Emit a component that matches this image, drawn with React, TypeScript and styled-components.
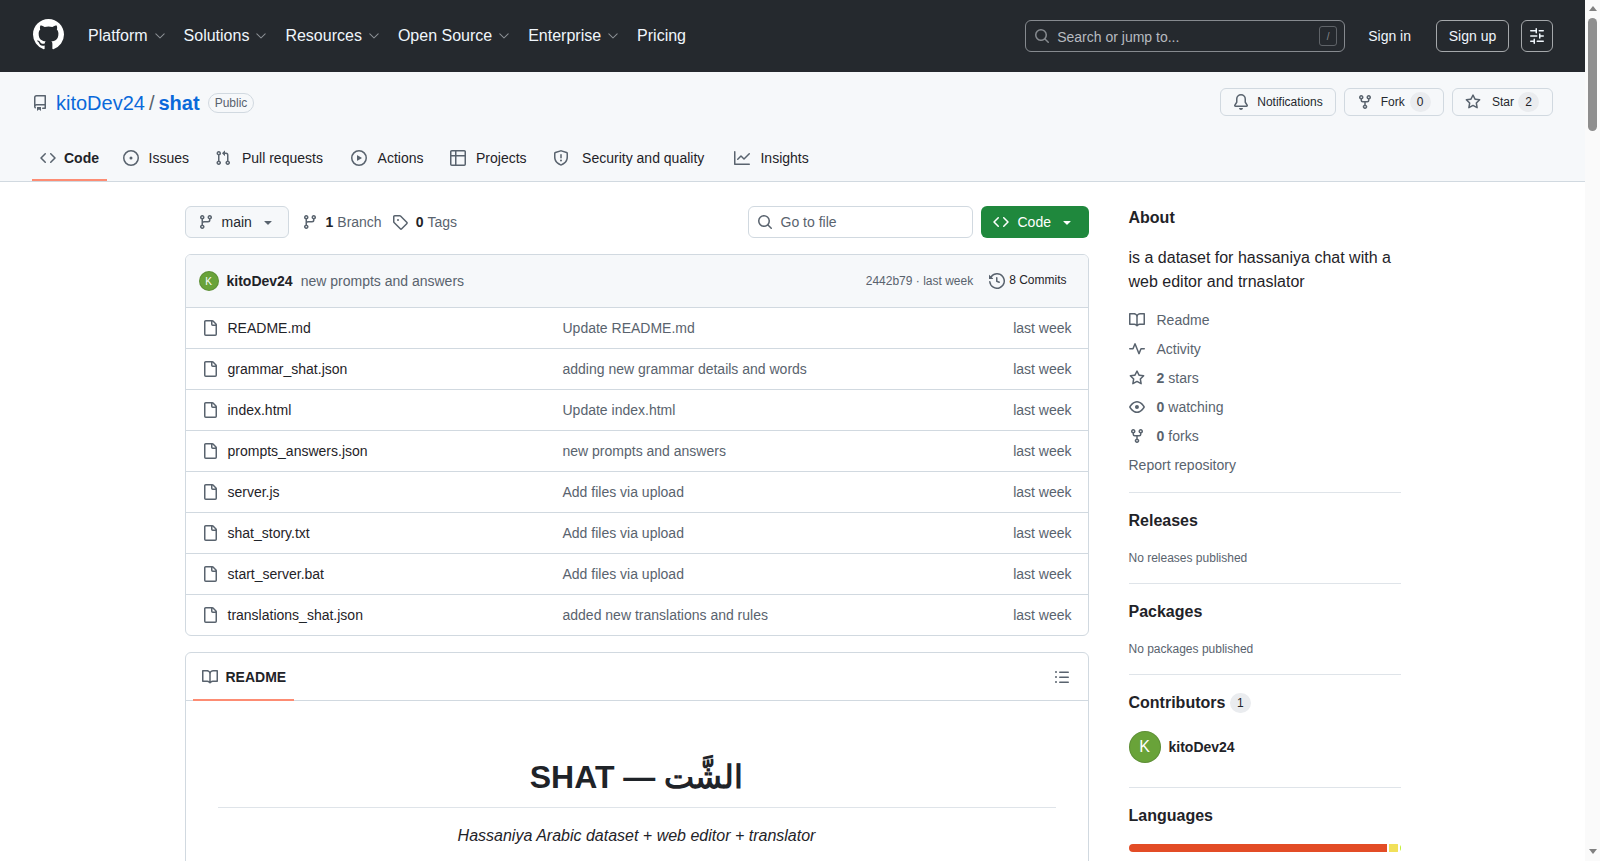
import styled, { createGlobalStyle } from "styled-components";
import { GoChevronDown } from "react-icons/go";

const GlobalStyle = createGlobalStyle`
  html, body {
    margin: 0;
    height: 100%;
    overflow: hidden;
    background: #fff;
  }
  body {
    font-family: "Liberation Sans", sans-serif;
    font-size: 14px;
    color: #1f2328;
  }
  * {
    box-sizing: border-box;
  }
`;

// 16px octicons, the react-icons set only ships the thinner 24px drawings
const icons = {
  bell: "M8 16a2 2 0 0 0 1.985-1.75c.017-.137-.097-.25-.235-.25h-3.5c-.138 0-.252.113-.235.25A2 2 0 0 0 8 16ZM3 5a5 5 0 0 1 10 0v2.947c0 .05.015.098.042.139l1.703 2.555A1.519 1.519 0 0 1 13.482 13H2.518a1.516 1.516 0 0 1-1.263-2.36l1.703-2.554A.255.255 0 0 0 3 7.947Zm5-3.5A3.5 3.5 0 0 0 4.5 5v2.947c0 .346-.102.683-.294.97l-1.703 2.556a.017.017 0 0 0-.003.01l.001.006c0 .002.002.004.004.006l.006.004.007.001h10.964l.007-.001.006-.004.004-.006.001-.007a.017.017 0 0 0-.003-.01l-1.703-2.554a1.745 1.745 0 0 1-.294-.97V5A3.5 3.5 0 0 0 8 1.5Z",
  book: "M0 1.75A.75.75 0 0 1 .75 1h4.253c1.227 0 2.317.59 3 1.501A3.743 3.743 0 0 1 11.006 1h4.245a.75.75 0 0 1 .75.75v10.5a.75.75 0 0 1-.75.75h-4.507a2.25 2.25 0 0 0-1.591.659l-.622.621a.75.75 0 0 1-1.06 0l-.622-.621A2.25 2.25 0 0 0 5.258 13H.75a.75.75 0 0 1-.75-.75Zm7.251 10.324.004-5.073-.002-2.253A2.25 2.25 0 0 0 5.003 2.5H1.5v9h3.757a3.75 3.75 0 0 1 1.994.574ZM8.755 4.75l-.004 7.322a3.752 3.752 0 0 1 1.992-.572H14.5v-9h-3.495a2.25 2.25 0 0 0-2.25 2.25Z",
  code: "m11.28 3.22 4.25 4.25a.75.75 0 0 1 0 1.06l-4.25 4.25a.749.749 0 0 1-1.275-.326.749.749 0 0 1 .215-.734L13.94 8l-3.72-3.72a.749.749 0 0 1 .326-1.275.749.749 0 0 1 .734.215Zm-6.56 0a.751.751 0 0 1 1.042.018.751.751 0 0 1 .018 1.042L2.06 8l3.72 3.72a.749.749 0 0 1-.326 1.275.749.749 0 0 1-.734-.215L.47 8.53a.75.75 0 0 1 0-1.06Z",
  eye: "M8 2c1.981 0 3.671.992 4.933 2.078 1.27 1.091 2.187 2.345 2.637 3.023a1.62 1.62 0 0 1 0 1.798c-.45.678-1.367 1.932-2.637 3.023C11.67 13.008 9.981 14 8 14c-1.981 0-3.671-.992-4.933-2.078C1.797 10.83.88 9.576.43 8.898a1.62 1.62 0 0 1 0-1.798c.45-.677 1.367-1.931 2.637-3.022C4.33 2.992 6.019 2 8 2ZM1.679 7.932a.12.12 0 0 0 0 .136c.411.622 1.241 1.75 2.366 2.717C5.176 11.758 6.527 12.5 8 12.5c1.473 0 2.825-.742 3.955-1.715 1.124-.967 1.954-2.096 2.366-2.717a.12.12 0 0 0 0-.136c-.412-.621-1.242-1.75-2.366-2.717C10.824 4.242 9.473 3.5 8 3.5c-1.473 0-2.825.742-3.955 1.715-1.124.967-1.954 2.096-2.366 2.717ZM8 10a2 2 0 1 1-.001-3.999A2 2 0 0 1 8 10Z",
  file: "M2 1.75C2 .784 2.784 0 3.75 0h6.586c.464 0 .909.184 1.237.513l2.914 2.914c.329.328.513.773.513 1.237v9.586A1.75 1.75 0 0 1 13.25 16h-9.5A1.75 1.75 0 0 1 2 14.25Zm1.75-.25a.25.25 0 0 0-.25.25v12.5c0 .138.112.25.25.25h9.5a.25.25 0 0 0 .25-.25V6h-2.75A1.75 1.75 0 0 1 9 4.25V1.5Zm6.75.062V4.25c0 .138.112.25.25.25h2.688l-.011-.013-2.914-2.914-.013-.011Z",
  fork: "M5 5.372v.878c0 .414.336.75.75.75h4.5a.75.75 0 0 0 .75-.75v-.878a2.25 2.25 0 1 1 1.5 0v.878a2.25 2.25 0 0 1-2.25 2.25h-1.5v2.128a2.251 2.251 0 1 1-1.5 0V8.5h-1.5A2.25 2.25 0 0 1 3.5 6.25v-.878a2.25 2.25 0 1 1 1.5 0ZM5 3.25a.75.75 0 1 0-1.5 0 .75.75 0 0 0 1.5 0Zm6.75.75a.75.75 0 1 0 0-1.5.75.75 0 0 0 0 1.5Zm-3 8.75a.75.75 0 1 0-1.5 0 .75.75 0 0 0 1.5 0Z",
  branch: "M9.5 3.25a2.25 2.25 0 1 1 3 2.122V6A2.5 2.5 0 0 1 10 8.5H6a1 1 0 0 0-1 1v1.128a2.251 2.251 0 1 1-1.5 0V5.372a2.25 2.25 0 1 1 1.5 0v1.836A2.493 2.493 0 0 1 6 7h4a1 1 0 0 0 1-1v-.628A2.25 2.25 0 0 1 9.5 3.25Zm-6 0a.75.75 0 1 0 1.5 0 .75.75 0 0 0-1.5 0Zm8.25-.75a.75.75 0 1 0 0 1.5.75.75 0 0 0 0-1.5ZM4.25 12a.75.75 0 1 0 0 1.5.75.75 0 0 0 0-1.5Z",
  graph: "M1.5 1.75V13.5h13.75a.75.75 0 0 1 0 1.5H.75a.75.75 0 0 1-.75-.75V1.75a.75.75 0 0 1 1.5 0Zm14.28 2.53-5.25 5.25a.75.75 0 0 1-1.06 0L7 7.06 4.28 9.78a.751.751 0 0 1-1.042-.018.751.751 0 0 1-.018-1.042l3.25-3.25a.75.75 0 0 1 1.06 0L10 7.94l4.72-4.72a.751.751 0 0 1 1.042.018.751.751 0 0 1 .018 1.042Z",
  history: "m.427 1.927 1.215 1.215a8.002 8.002 0 1 1-1.6 5.685.75.75 0 1 1 1.493-.154 6.5 6.5 0 1 0 1.18-4.458l1.358 1.358A.25.25 0 0 1 3.896 6H.25A.25.25 0 0 1 0 5.75V2.104a.25.25 0 0 1 .427-.177ZM7.75 4a.75.75 0 0 1 .75.75v2.992l2.028.812a.75.75 0 0 1-.557 1.392l-2.5-1A.751.751 0 0 1 7 8.25v-3.5A.75.75 0 0 1 7.75 4Z",
  issue: "M8 9.5a1.5 1.5 0 1 0 0-3 1.5 1.5 0 0 0 0 3ZM8 0a8 8 0 1 1 0 16A8 8 0 0 1 8 0ZM1.5 8a6.5 6.5 0 1 0 13 0 6.5 6.5 0 0 0-13 0Z",
  list: "M5.75 2.5h8.5a.75.75 0 0 1 0 1.5h-8.5a.75.75 0 0 1 0-1.5Zm0 5h8.5a.75.75 0 0 1 0 1.5h-8.5a.75.75 0 0 1 0-1.5Zm0 5h8.5a.75.75 0 0 1 0 1.5h-8.5a.75.75 0 0 1 0-1.5ZM2 14a1 1 0 1 1 0-2 1 1 0 0 1 0 2Zm1-6a1 1 0 1 1-2 0 1 1 0 0 1 2 0ZM2 4a1 1 0 1 1 0-2 1 1 0 0 1 0 2Z",
  logo: "M8 0c4.42 0 8 3.58 8 8a8.013 8.013 0 0 1-5.45 7.59c-.4.08-.55-.17-.55-.38 0-.27.01-1.13.01-2.2 0-.75-.25-1.23-.54-1.48 1.78-.2 3.65-.88 3.65-3.95 0-.88-.31-1.59-.82-2.15.08-.2.36-1.02-.08-2.12 0 0-.67-.22-2.2.82-.64-.18-1.32-.27-2-.27-.68 0-1.36.09-2 .27-1.53-1.03-2.2-.82-2.2-.82-.44 1.1-.16 1.92-.08 2.12-.51.56-.82 1.28-.82 2.15 0 3.06 1.86 3.75 3.64 3.95-.23.2-.44.55-.51 1.07-.46.21-1.61.55-2.33-.66-.15-.24-.6-.83-1.23-.82-.67.01-.27.38.01.53.34.19.73.9.82 1.13.16.45.68 1.31 2.69.94 0 .67.01 1.3.01 1.49 0 .21-.15.45-.55.38A7.995 7.995 0 0 1 0 8c0-4.42 3.58-8 8-8Z",
  play: "M8 0a8 8 0 1 1 0 16A8 8 0 0 1 8 0ZM1.5 8a6.5 6.5 0 1 0 13 0 6.5 6.5 0 0 0-13 0Zm4.879-2.773 4.264 2.559a.25.25 0 0 1 0 .428l-4.264 2.559A.25.25 0 0 1 6 10.559V5.442a.25.25 0 0 1 .379-.215Z",
  pull: "M1.5 3.25a2.25 2.25 0 1 1 3 2.122v5.256a2.251 2.251 0 1 1-1.5 0V5.372A2.25 2.25 0 0 1 1.5 3.25Zm5.677-.177L9.573.677A.25.25 0 0 1 10 .854V2.5h1A2.5 2.5 0 0 1 13.5 5v5.628a2.251 2.251 0 1 1-1.5 0V5a1 1 0 0 0-1-1h-1v1.646a.25.25 0 0 1-.427.177L7.177 3.427a.25.25 0 0 1 0-.354ZM3.75 2.5a.75.75 0 1 0 0 1.5.75.75 0 0 0 0-1.5Zm0 9.5a.75.75 0 1 0 0 1.5.75.75 0 0 0 0-1.5Zm8.25.75a.75.75 0 1 0 1.5 0 .75.75 0 0 0-1.5 0Z",
  pulse: "M6 2c.306 0 .582.187.696.471L10 10.731l1.304-3.26A.751.751 0 0 1 12 7h3.25a.75.75 0 0 1 0 1.5h-2.742l-1.812 4.528a.751.751 0 0 1-1.392 0L6 4.77 4.696 8.03A.75.75 0 0 1 4 8.5H.75a.75.75 0 0 1 0-1.5h2.742l1.812-4.529A.751.751 0 0 1 6 2Z",
  repo: "M2 2.5A2.5 2.5 0 0 1 4.5 0h8.75a.75.75 0 0 1 .75.75v12.5a.75.75 0 0 1-.75.75h-2.5a.75.75 0 0 1 0-1.5h1.75v-2h-8a1 1 0 0 0-.714 1.7.75.75 0 1 1-1.072 1.05A2.495 2.495 0 0 1 2 11.5Zm10.5-1h-8a1 1 0 0 0-1 1v6.708A2.486 2.486 0 0 1 4.5 9h8ZM5 12.25a.25.25 0 0 1 .25-.25h3.5a.25.25 0 0 1 .25.25v3.25a.25.25 0 0 1-.4.2l-1.45-1.087a.249.249 0 0 0-.3 0L5.4 15.7a.25.25 0 0 1-.4-.2Z",
  search: "M10.68 11.74a6 6 0 0 1-7.922-8.982 6 6 0 0 1 8.982 7.922l3.04 3.04a.749.749 0 0 1-.326 1.275.749.749 0 0 1-.734-.215ZM11.5 7a4.499 4.499 0 1 0-8.997 0A4.499 4.499 0 0 0 11.5 7Z",
  shield: "M7.467.133a1.748 1.748 0 0 1 1.066 0l5.25 1.68A1.75 1.75 0 0 1 15 3.48V7c0 1.566-.32 3.182-1.303 4.682-.983 1.498-2.585 2.813-5.032 3.855a1.697 1.697 0 0 1-1.33 0c-2.447-1.042-4.049-2.357-5.032-3.855C1.32 10.182 1 8.566 1 7V3.48a1.75 1.75 0 0 1 1.217-1.667Zm.61 1.429a.25.25 0 0 0-.153 0l-5.25 1.68a.25.25 0 0 0-.174.238V7c0 1.358.275 2.666 1.057 3.86.784 1.194 2.121 2.34 4.366 3.297a.196.196 0 0 0 .154 0c2.245-.956 3.582-2.104 4.366-3.298C13.225 9.666 13.5 8.36 13.5 7V3.48a.251.251 0 0 0-.174-.237l-5.25-1.68ZM8.75 4.75v3a.75.75 0 0 1-1.5 0v-3a.75.75 0 0 1 1.5 0ZM9 10.5a1 1 0 1 1-2 0 1 1 0 0 1 2 0Z",
  sliders: "M15 2.75a.75.75 0 0 1-.75.75h-4a.75.75 0 0 1 0-1.5h4a.75.75 0 0 1 .75.75Zm-8.5.75v1.25a.75.75 0 0 0 1.5 0v-4a.75.75 0 0 0-1.5 0V2H1.75a.75.75 0 0 0 0 1.5H6.5Zm1.25 5.25a.75.75 0 0 0 0-1.5h-6a.75.75 0 0 0 0 1.5h6ZM15 8a.75.75 0 0 1-.75.75H11.5V10a.75.75 0 1 1-1.5 0V6a.75.75 0 0 1 1.5 0v1.25h2.75A.75.75 0 0 1 15 8Zm-9 5.25v-2a.75.75 0 0 0-1.5 0v1.25H1.75a.75.75 0 0 0 0 1.5H4.5v1.25a.75.75 0 0 0 1.5 0v-2Zm9 0a.75.75 0 0 1-.75.75h-6a.75.75 0 0 1 0-1.5h6a.75.75 0 0 1 .75.75Z",
  star: "M8 .25a.75.75 0 0 1 .673.418l1.882 3.815 4.21.612a.75.75 0 0 1 .416 1.279l-3.046 2.97.719 4.192a.751.751 0 0 1-1.088.791L8 12.347l-3.766 1.98a.75.75 0 0 1-1.088-.79l.72-4.194L.818 6.374a.75.75 0 0 1 .416-1.28l4.21-.611L7.327.668A.75.75 0 0 1 8 .25Zm0 2.445L6.615 5.5a.75.75 0 0 1-.564.41l-3.097.45 2.24 2.184a.75.75 0 0 1 .216.664l-.528 3.084 2.769-1.456a.75.75 0 0 1 .698 0l2.77 1.456-.53-3.084a.75.75 0 0 1 .216-.664l2.24-2.183-3.096-.45a.75.75 0 0 1-.564-.41L8 2.694Z",
  table: "M0 1.75C0 .784.784 0 1.75 0h12.5C15.216 0 16 .784 16 1.75v12.5A1.75 1.75 0 0 1 14.25 16H1.75A1.75 1.75 0 0 1 0 14.25ZM6.5 6.5v8h7.75a.25.25 0 0 0 .25-.25V6.5Zm8-1.5V1.75a.25.25 0 0 0-.25-.25H6.5V5Zm-13 1.5v7.75c0 .138.112.25.25.25H5v-8ZM5 5V1.5H1.75a.25.25 0 0 0-.25.25V5Z",
  tag: "M1 7.775V2.75C1 1.784 1.784 1 2.75 1h5.025c.464 0 .91.184 1.238.513l6.25 6.25a1.75 1.75 0 0 1 0 2.474l-5.026 5.026a1.75 1.75 0 0 1-2.474 0l-6.25-6.25A1.752 1.752 0 0 1 1 7.775Zm1.5 0c0 .066.026.13.073.177l6.25 6.25a.25.25 0 0 0 .354 0l5.025-5.025a.25.25 0 0 0 0-.354l-6.25-6.25a.25.25 0 0 0-.177-.073H2.75a.25.25 0 0 0-.25.25ZM6 5a1 1 0 1 1 0 2 1 1 0 0 1 0-2Z",
  caret: "m4.427 7.427 3.396 3.396a.25.25 0 0 0 .354 0l3.396-3.396A.25.25 0 0 0 11.396 7H4.604a.25.25 0 0 0-.177.427Z",
};

type IconName = keyof typeof icons;

const IconSvg = styled.svg`
  width: 16px;
  height: 16px;
  flex: none;
  fill: currentColor;
`;

function Icon({ name }: { name: IconName }) {
  return (
    <IconSvg viewBox="0 0 16 16">
      <path d={icons[name]} />
    </IconSvg>
  );
}

const Shell = styled.div`
  display: flex;
  height: 861px;
  overflow: hidden;
`;

const Page = styled.div`
  flex: 1;
  min-width: 0;
`;

const ScrollTrack = styled.div`
  width: 15px;
  background: #fafafa;
  display: flex;
  flex-direction: column;
  align-items: center;
  justify-content: space-between;
  padding: 6px 0 7px;
`;

const ScrollArrow = styled.div<{ $down?: boolean }>`
  width: 0;
  height: 0;
  border-left: 4.5px solid transparent;
  border-right: 4.5px solid transparent;
  ${(p) =>
    p.$down
      ? "border-top: 5px solid #808080;"
      : "border-bottom: 5px solid #808080;"}
`;

const ScrollThumb = styled.div`
  width: 9px;
  height: 113px;
  margin-top: 7px;
  margin-bottom: auto;
  border-radius: 5px;
  background: #8e8e8e;
`;

const TopBar = styled.header`
  height: 72px;
  background: #25292e;
  color: #fff;
  display: flex;
  align-items: center;
  padding: 0 32px;
`;

const LogoMark = styled.svg`
  width: 31px;
  height: 31px;
  margin-top: -3px;
  margin-left: 0.5px;
  margin-right: 24.5px;
  fill: #fff;
`;

const MainNav = styled.nav`
  display: flex;
  align-items: center;
  gap: 16px;
  flex: 1;
`;

const NavItem = styled.span`
  display: flex;
  align-items: center;
  gap: 4px;
  font-size: 16px;
  margin-top: -1px;
  color: #f0f6fc;
  svg {
    width: 16px;
    height: 16px;
    color: #8d9196;
  }
`;

const SearchBox = styled.div`
  width: 320px;
  height: 32px;
  border: 1px solid #868a8f;
  border-radius: 6px;
  display: flex;
  align-items: center;
  padding: 0 7px 0 8px;
  color: #b7bbc0;
  font-size: 14px;
  svg {
    color: #868a8f;
    margin-right: 7px;
  }
`;

const SearchText = styled.span`
  flex: 1;
  padding-top: 1px;
`;

const SlashKey = styled.span`
  width: 18px;
  height: 20px;
  border: 1px solid #5f6368;
  border-radius: 3px;
  font-size: 10px;
  color: #868a8f;
  display: flex;
  align-items: center;
  justify-content: center;
`;

const SignIn = styled.span`
  margin-left: 23px;
  margin-right: 25px;
  font-size: 14px;
  color: #f0f6fc;
`;

const SignUp = styled.span`
  height: 32px;
  width: 73px;
  border: 1px solid #a5a8ab;
  border-radius: 6px;
  display: flex;
  align-items: center;
  justify-content: center;
  font-size: 14px;
  color: #f0f6fc;
`;

const ToggleButton = styled(SignUp)`
  width: 32px;
  margin-left: 12px;
`;

const RepoHeader = styled.section`
  height: 110px;
  background: #f6f8fa;
  border-bottom: 1px solid #d1d9e0;
  padding: 16px 32px 0;
`;

const RepoRow = styled.div`
  display: flex;
  align-items: center;
  height: 28px;
  margin-bottom: 18px;
`;

const RepoTitle = styled.div`
  display: flex;
  align-items: center;
  flex: 1;
  margin-top: 2px;
  font-size: 20px;
  color: #59636e;
  > svg {
    margin-right: 8px;
  }
`;

const RepoLink = styled.a<{ $bold?: boolean }>`
  color: #0969da;
  font-weight: ${(p) => (p.$bold ? 700 : 400)};
`;

const Slash = styled.span`
  margin: 0 4px;
`;

const PublicBadge = styled.span`
  margin-left: 8px;
  height: 20px;
  padding: 0 6px;
  display: flex;
  align-items: center;
  border: 1px solid #d1d9e0;
  border-radius: 10px;
  font-size: 12px;
  color: #59636e;
`;

const RepoActions = styled.div`
  display: flex;
  gap: 8px;
`;

const SmallButton = styled.span<{ $padRight?: number }>`
  height: 28px;
  display: flex;
  align-items: center;
  padding: 0 ${(p) => p.$padRight ?? 12}px 0 12px;
  background: #f6f8fa;
  border: 1px solid #d1d9e0;
  border-radius: 6px;
  font-size: 12px;
  color: #25292e;
  svg {
    color: #59636e;
    margin-right: 8px;
  }
`;

const Counter = styled.span<{ $gap?: number }>`
  min-width: 21px;
  height: 20px;
  margin-left: ${(p) => p.$gap ?? 5}px;
  padding: 0 6px;
  display: inline-flex;
  align-items: center;
  justify-content: center;
  border-radius: 10px;
  background: #eaecef;
  font-size: 12px;
  font-weight: 400;
  color: #1f2328;
`;

const Tabs = styled.nav`
  display: flex;
  height: 47px;
`;

const Tab = styled.span<{ $active?: boolean; $gap: number; $after: number }>`
  display: flex;
  align-items: center;
  gap: ${(p) => p.$gap}px;
  margin-right: ${(p) => p.$after}px;
  padding: 2px 8px 0;
  font-size: 14px;
  font-weight: ${(p) => (p.$active ? 700 : 400)};
  color: #1f2328;
  border-bottom: 2px solid ${(p) => (p.$active ? "#fd8c73" : "transparent")};
  svg {
    color: #59636e;
  }
`;

const Content = styled.main`
  width: 1216px;
  margin: 24px auto 0;
  display: flex;
  gap: 40px;
  align-items: flex-start;
`;

const MainColumn = styled.div`
  width: 904px;
`;

const FileNav = styled.div`
  display: flex;
  align-items: center;
  height: 32px;
  margin-bottom: 16px;
`;

const BranchButton = styled.span`
  width: 104px;
  height: 32px;
  display: flex;
  align-items: center;
  padding: 0 12px;
  background: #f6f8fa;
  border: 1px solid #d1d9e0;
  border-radius: 6px;
  font-size: 14px;
  color: #25292e;
  svg {
    color: #59636e;
  }
`;

const BranchName = styled.span`
  margin: 0 8px;
  flex: 1;
`;

const MetaLink = styled.span<{ $first?: boolean }>`
  display: flex;
  align-items: center;
  margin-left: ${(p) => (p.$first ? "13px" : "10px")};
  font-size: 14px;
  color: #59636e;
  svg {
    margin-right: 8px;
  }
  b {
    color: #1f2328;
    margin-right: 4px;
  }
`;

const GoToFile = styled.div`
  width: 225px;
  height: 32px;
  margin-left: auto;
  display: flex;
  align-items: center;
  gap: 8px;
  padding: 0 8px;
  border: 1px solid #d1d9e0;
  border-radius: 6px;
  font-size: 14px;
  color: #59636e;
`;

const CodeButton = styled.span`
  width: 108px;
  height: 32px;
  margin-left: 8px;
  display: flex;
  align-items: center;
  padding: 0 14px 0 12px;
  background: #1f883d;
  border-radius: 6px;
  font-size: 14px;
  color: #fff;
`;

const CodeLabel = styled.span`
  margin: 0 8px 0 9px;
  flex: 1;
`;

const FileBox = styled.div`
  border: 1px solid #d1d9e0;
  border-radius: 6px;
  overflow: hidden;
`;

const CommitRow = styled.div`
  height: 52px;
  background: #f6f8fa;
  display: flex;
  align-items: center;
  padding: 0 21px 0 13px;
  font-size: 14px;
  color: #59636e;
`;

const Avatar = styled.span<{ $size: number }>`
  width: ${(p) => p.$size}px;
  height: ${(p) => p.$size}px;
  flex: none;
  border-radius: 50%;
  background: #69a339;
  box-shadow: 0 0 0 1px rgba(31, 35, 40, 0.15) inset;
  color: #fff;
  font-weight: 400;
  display: flex;
  align-items: center;
  justify-content: center;
  font-size: ${(p) => Math.round(p.$size * 0.5)}px;
`;

const CommitAuthor = styled.b`
  margin-left: 8px;
  color: #1f2328;
`;

const CommitMessage = styled.span`
  margin-left: 8px;
  flex: 1;
`;

const CommitMeta = styled.span`
  font-size: 12px;
`;

const CommitCount = styled.span`
  margin-left: 16px;
  display: flex;
  align-items: center;
  gap: 4px;
  font-size: 12px;
  color: #1f2328;
  svg {
    color: #59636e;
  }
`;

const CommitCountLabel = styled.span`
  margin-top: -2px;
`;

const FileRow = styled.div`
  height: 41px;
  border-top: 1px solid #d1d9e0;
  display: grid;
  grid-template-columns: 361px 1fr auto;
  align-items: center;
  padding: 0 16px;
  font-size: 14px;
  color: #59636e;
`;

const FileName = styled.span`
  display: flex;
  align-items: center;
  gap: 10px;
  color: #1f2328;
  svg {
    color: #59636e;
  }
`;

const Readme = styled.div`
  margin-top: 16px;
  border: 1px solid #d1d9e0;
  border-radius: 6px;
`;

const ReadmeTabs = styled.div`
  height: 48px;
  border-bottom: 1px solid #d1d9e0;
  display: flex;
  align-items: stretch;
  justify-content: space-between;
  padding: 0 18px 0 7px;
`;

const ReadmeTab = styled.span`
  width: 101px;
  margin-bottom: -1px;
  display: flex;
  align-items: center;
  gap: 8px;
  padding: 2px 0 0 9px;
  font-size: 14px;
  font-weight: 700;
  border-bottom: 2px solid #fd8c73;
  svg {
    color: #59636e;
  }
`;

const OutlineButton = styled.span`
  display: flex;
  align-items: center;
  color: #59636e;
`;

const ReadmeBody = styled.article`
  padding: 32px;
  text-align: center;
`;

const ReadmeTitle = styled.h1`
  margin: 24px 0 16px;
  padding-bottom: 10px;
  border-bottom: 1px solid #d1d9e0b3;
  font-size: 32px;
  line-height: 40px;
  font-weight: 700;
`;

const ReadmeLead = styled.p`
  margin: 0;
  font-size: 16px;
  line-height: 24px;
  font-style: italic;
`;

const Sidebar = styled.aside`
  width: 272px;
`;

const SideSection = styled.section<{ $first?: boolean; $padBottom?: number }>`
  padding: ${(p) => (p.$first ? 1 : 17)}px 0 ${(p) => p.$padBottom ?? 16}px;
  border-bottom: 1px solid #d1d9e0b3;
  &:last-child {
    border-bottom: 0;
  }
`;

const SideHeading = styled.h2`
  display: flex;
  align-items: center;
  margin: 0 0 17px;
  font-size: 16px;
  line-height: 22px;
  font-weight: 700;
`;

const About = styled.p`
  margin: 0 0 11.5px;
  font-size: 16px;
  line-height: 24px;
`;

const SideLink = styled.div`
  height: 29px;
  display: flex;
  align-items: center;
  font-size: 14px;
  color: #59636e;
  svg {
    margin-right: 12px;
  }
  b {
    margin-right: 4px;
  }
`;

const SideNote = styled.div`
  font-size: 12px;
  line-height: 18px;
  color: #59636e;
`;

const Contributor = styled.div`
  display: flex;
  align-items: center;
  gap: 8px;
  font-size: 14px;
  font-weight: 700;
`;

const LanguageBar = styled.div`
  height: 8px;
  display: flex;
  gap: 2px;
  border-radius: 6px;
  overflow: hidden;
`;

const LanguagePart = styled.span<{ $color: string }>`
  background: ${(p) => p.$color};
`;

const navItems = ["Platform", "Solutions", "Resources", "Open Source", "Enterprise"];

const tabs: { label: string; icon: IconName; gap: number; after: number }[] = [
  { label: "Code", icon: "code", gap: 8, after: 8 },
  { label: "Issues", icon: "issue", gap: 9.5, after: 10 },
  { label: "Pull requests", icon: "pull", gap: 11, after: 11.7 },
  { label: "Actions", icon: "play", gap: 11, after: 10 },
  { label: "Projects", icon: "table", gap: 10.5, after: 10 },
  { label: "Security and quality", icon: "shield", gap: 13.5, after: 14.2 },
  { label: "Insights", icon: "graph", gap: 10, after: 0 },
];

const files = [
  { name: "README.md", message: "Update README.md" },
  { name: "grammar_shat.json", message: "adding new grammar details and words" },
  { name: "index.html", message: "Update index.html" },
  { name: "prompts_answers.json", message: "new prompts and answers" },
  { name: "server.js", message: "Add files via upload" },
  { name: "shat_story.txt", message: "Add files via upload" },
  { name: "start_server.bat", message: "Add files via upload" },
  { name: "translations_shat.json", message: "added new translations and rules" },
];

const languages = [
  { color: "#e34c26", width: 258 },
  { color: "#f1e05a", width: 9 },
  { color: "#c1f12e", width: 1 },
];

function App() {
  return (
    <>
      <GlobalStyle />
      <Shell>
        <Page>
          <TopBar>
            <LogoMark viewBox="0 0 16 16">
              <path d={icons.logo} />
            </LogoMark>
            <MainNav>
              {navItems.map((item) => (
                <NavItem key={item}>
                  {item}
                  <GoChevronDown />
                </NavItem>
              ))}
              <NavItem>Pricing</NavItem>
            </MainNav>
            <SearchBox>
              <Icon name="search" />
              <SearchText>Search or jump to...</SearchText>
              <SlashKey>/</SlashKey>
            </SearchBox>
            <SignIn>Sign in</SignIn>
            <SignUp>Sign up</SignUp>
            <ToggleButton>
              <Icon name="sliders" />
            </ToggleButton>
          </TopBar>

          <RepoHeader>
            <RepoRow>
              <RepoTitle>
                <Icon name="repo" />
                <RepoLink>kitoDev24</RepoLink>
                <Slash>/</Slash>
                <RepoLink $bold>shat</RepoLink>
                <PublicBadge>Public</PublicBadge>
              </RepoTitle>
              <RepoActions>
                <SmallButton>
                  <Icon name="bell" />
                  Notifications
                </SmallButton>
                <SmallButton>
                  <Icon name="fork" />
                  Fork
                  <Counter>0</Counter>
                </SmallButton>
                <SmallButton $padRight={13}>
                  <Icon name="star" />
                  <span>&nbsp;Star</span>
                  <Counter $gap={4}>2</Counter>
                </SmallButton>
              </RepoActions>
            </RepoRow>
            <Tabs>
              {tabs.map((tab, i) => (
                <Tab key={tab.label} $active={i === 0} $gap={tab.gap} $after={tab.after}>
                  <Icon name={tab.icon} />
                  {tab.label}
                </Tab>
              ))}
            </Tabs>
          </RepoHeader>

          <Content>
            <MainColumn>
              <FileNav>
                <BranchButton>
                  <Icon name="branch" />
                  <BranchName>main</BranchName>
                  <Icon name="caret" />
                </BranchButton>
                <MetaLink $first>
                  <Icon name="branch" />
                  <b>1</b> Branch
                </MetaLink>
                <MetaLink>
                  <Icon name="tag" />
                  <b>0</b> Tags
                </MetaLink>
                <GoToFile>
                  <Icon name="search" />
                  Go to file
                </GoToFile>
                <CodeButton>
                  <Icon name="code" />
                  <CodeLabel>Code</CodeLabel>
                  <Icon name="caret" />
                </CodeButton>
              </FileNav>

              <FileBox>
                <CommitRow>
                  <Avatar $size={20}>K</Avatar>
                  <CommitAuthor>kitoDev24</CommitAuthor>
                  <CommitMessage>new prompts and answers</CommitMessage>
                  <CommitMeta>2442b79 · last week</CommitMeta>
                  <CommitCount>
                    <Icon name="history" />
                    <CommitCountLabel>8 Commits</CommitCountLabel>
                  </CommitCount>
                </CommitRow>
                {files.map((file) => (
                  <FileRow key={file.name}>
                    <FileName>
                      <Icon name="file" />
                      {file.name}
                    </FileName>
                    <span>{file.message}</span>
                    <span>last week</span>
                  </FileRow>
                ))}
              </FileBox>

              <Readme>
                <ReadmeTabs>
                  <ReadmeTab>
                    <Icon name="book" />
                    README
                  </ReadmeTab>
                  <OutlineButton>
                    <Icon name="list" />
                  </OutlineButton>
                </ReadmeTabs>
                <ReadmeBody>
                  <ReadmeTitle>SHAT — الشَّت</ReadmeTitle>
                  <ReadmeLead>Hassaniya Arabic dataset + web editor + translator</ReadmeLead>
                </ReadmeBody>
              </Readme>
            </MainColumn>

            <Sidebar>
              <SideSection $first $padBottom={12}>
                <SideHeading>About</SideHeading>
                <About>is a dataset for hassaniya chat with a web editor and trnaslator</About>
                <SideLink>
                  <Icon name="book" />
                  Readme
                </SideLink>
                <SideLink>
                  <Icon name="pulse" />
                  Activity
                </SideLink>
                <SideLink>
                  <Icon name="star" />
                  <b>2</b> stars
                </SideLink>
                <SideLink>
                  <Icon name="eye" />
                  <b>0</b> watching
                </SideLink>
                <SideLink>
                  <Icon name="fork" />
                  <b>0</b> forks
                </SideLink>
                <SideLink>Report repository</SideLink>
              </SideSection>
              <SideSection>
                <SideHeading>Releases</SideHeading>
                <SideNote>No releases published</SideNote>
              </SideSection>
              <SideSection>
                <SideHeading>Packages</SideHeading>
                <SideNote>No packages published</SideNote>
              </SideSection>
              <SideSection $padBottom={24}>
                <SideHeading>
                  Contributors <Counter $gap={4.5}>1</Counter>
                </SideHeading>
                <Contributor>
                  <Avatar $size={32}>K</Avatar>
                  kitoDev24
                </Contributor>
              </SideSection>
              <SideSection>
                <SideHeading>Languages</SideHeading>
                <LanguageBar>
                  {languages.map((lang) => (
                    <LanguagePart
                      key={lang.color}
                      $color={lang.color}
                      style={{ width: lang.width }}
                    />
                  ))}
                </LanguageBar>
              </SideSection>
            </Sidebar>
          </Content>
        </Page>
        <ScrollTrack>
          <ScrollArrow />
          <ScrollThumb />
          <ScrollArrow $down />
        </ScrollTrack>
      </Shell>
    </>
  );
}

export default App;
